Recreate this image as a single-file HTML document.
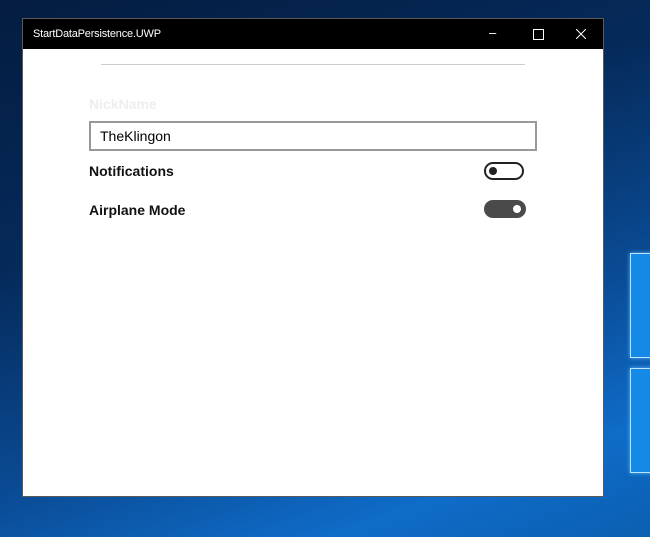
<!DOCTYPE html>
<html><head><style>
body{margin:0;width:650px;height:537px;overflow:hidden;position:relative;font-family:"Liberation Sans",sans-serif;
background:linear-gradient(160deg,#041c40 0%,#052a5a 35%,#0a4c96 65%,#0f6cc8 85%,#0b5fb0 100%);}
.pane{position:absolute;background:#148ae6;border:1px solid #bfe4ff;box-shadow:0 0 4px #5ab4ff;}
.win{position:absolute;left:22px;top:18px;width:580px;height:477px;background:#fff;border:1px solid #5a5a5a;}
.tb{height:30px;background:#000;color:#fff;font-size:11px;line-height:30px;padding-left:10px;position:relative;letter-spacing:-0.2px;}
.ic{position:absolute;top:0;color:#fff;font-size:13px;}
.lbl{position:absolute;font-size:14px;font-weight:bold;color:#111;}
.tog{position:absolute;width:38px;height:16px;border-radius:10px;}
</style></head><body>
<div class="pane" style="left:630px;top:253px;width:30px;height:103px"></div>
<div class="pane" style="left:630px;top:368px;width:30px;height:103px"></div>
<div class="win">
<div class="tb">StartDataPersistence.UWP
<span class="ic" style="left:466px;top:-1px">&#8211;</span>
<span style="position:absolute;left:510px;top:10px;width:9px;height:9px;border:1px solid #fff"></span>
<svg style="position:absolute;left:553px;top:10px" width="10" height="10"><path d="M0 0L10 10M10 0L0 10" stroke="#fff" stroke-width="1"/></svg>
</div>
<div style="position:absolute;left:78px;top:45px;width:424px;height:1px;background:#ccc"></div>
<div class="lbl" style="left:66px;top:77px;color:#eee;font-weight:bold">NickName</div>
<div style="position:absolute;left:66px;top:102px;height:26px;border:2px solid #999;font-size:14px;line-height:26px;padding-left:9px;box-sizing:content-box;width:435px">TheKlingon</div>
<div class="lbl" style="left:66px;top:144px">Notifications</div>
<div class="tog" style="left:461px;top:143px;border:2px solid #222;width:36px;height:14px"><span style="position:absolute;left:3px;top:3px;width:8px;height:8px;border-radius:50%;background:#222"></span></div>
<div class="lbl" style="left:66px;top:183px">Airplane Mode</div>
<div class="tog" style="left:461px;top:181px;background:#4a4a4a;height:18px;width:42px"><span style="position:absolute;right:5px;top:5px;width:8px;height:8px;border-radius:50%;background:#fff"></span></div>
</div>
</body></html>
